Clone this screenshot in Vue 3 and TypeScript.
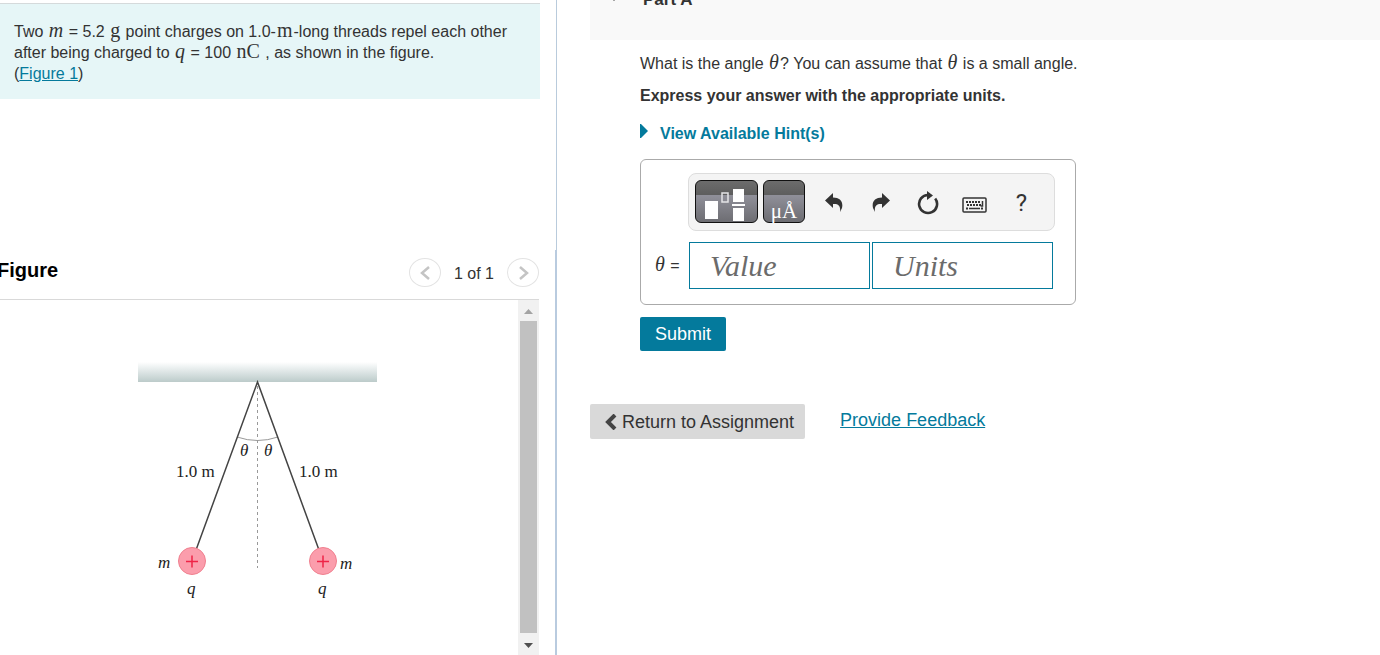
<script setup lang="ts">
import { ref } from 'vue'

const value = ref('')
const units = ref('')

const charges = [
  { x: 72, massX: 38, massY: 218 },
  { x: 203, massX: 220, massY: 219 },
]
</script>

<template>
  <div class="page">
    <aside class="left">
      <section class="problem">
        <p class="statement">
          Two <i class="math">m</i> = 5.2 <span class="math">g</span> point charges on 1.0-<span class="math">m</span>-long threads repel each other<br />
          after being charged to <i class="math">q</i> = 100 <span class="math">nC</span> , as shown in the figure.<br />
          (<a href="#figure">Figure 1</a>)
        </p>
      </section>

      <section id="figure" class="figure">
        <header class="figure-head">
          <h2>Figure</h2>
          <nav class="pager" aria-label="Figures">
            <button type="button" aria-label="Previous figure">
              <svg width="14" height="16" viewBox="0 0 14 16"><path d="M11 2 4 8l7 6" /></svg>
            </button>
            <span>1 of 1</span>
            <button type="button" aria-label="Next figure">
              <svg width="14" height="16" viewBox="0 0 14 16"><path d="m4 2 7 6-7 6" /></svg>
            </button>
          </nav>
        </header>

        <div class="figure-body">
          <div class="canvas">
            <svg class="diagram" width="260" height="250" viewBox="0 0 260 250" role="img" aria-label="Two charged masses hanging from a common point">
              <defs>
                <linearGradient id="ceiling" x1="0" y1="0" x2="0" y2="1">
                  <stop offset="0" stop-color="#ffffff" />
                  <stop offset="0.5" stop-color="#dde5e5" />
                  <stop offset="1" stop-color="#bccbca" />
                </linearGradient>
              </defs>
              <rect x="18" y="12" width="239" height="20" fill="url(#ceiling)" />
              <path d="M137.500 36V218" stroke="#999" stroke-dasharray="3 3" />
              <path d="M117 87q20.500 7 41 0" fill="none" stroke="#999" />
              <path d="M76 200 137.500 32 199 200" fill="none" stroke="#444" stroke-width="1.500" />
              <g v-for="c in charges" :key="c.x">
                <circle :cx="c.x" cy="211" r="13.500" fill="#fb9dac" stroke="#f0808f" />
                <path :d="`M${c.x - 6} 211.500h12M${c.x} 205.500v12`" stroke="#ee2447" stroke-width="1.500" />
                <text class="it" :x="c.massX" :y="c.massY">m</text>
                <text class="it" :x="c.x - 5" y="244">q</text>
              </g>
              <text class="it" x="120" y="106">θ</text>
              <text class="it" x="144" y="106">θ</text>
              <text x="56" y="127">1.0 m</text>
              <text x="179" y="127">1.0 m</text>
            </svg>
          </div>
          <div class="scrollbar" aria-hidden="true">
            <svg width="21" height="21" viewBox="0 0 21 21"><path d="M6 14h9l-4.500-5z" fill="#a3a3a3" /></svg>
            <div class="thumb"></div>
            <svg width="21" height="22" viewBox="0 0 21 22"><path d="M6 10h9l-4.500 5z" fill="#505050" /></svg>
          </div>
        </div>
      </section>
    </aside>

    <main class="right">
      <header class="part-head">
        <svg width="10" height="8" viewBox="0 0 10 8"><path d="M0 0h10L5 6z" fill="#333" /></svg>
        <h2>Part A</h2>
      </header>

      <div class="part">
        <p>What is the angle <i class="theta">θ</i>? You can assume that <i class="theta">θ</i> is a small angle.</p>
        <p class="instruction">Express your answer with the appropriate units.</p>
        <button type="button" class="hints">
          <svg width="8" height="14" viewBox="0 0 8 14"><path d="M0 0h1L8 7 1 14H0z" fill="#047a9c" /></svg>
          View Available Hint(s)
        </button>

        <form id="answer" class="answer" @submit.prevent>
          <div class="toolbar">
            <button type="button" class="dark wide" aria-label="Templates">
              <svg width="61" height="41" viewBox="0 0 61 41">
                <path d="M9 20h13v18H9zM37 8h11v13H37zM37 27h11v13H37zM36 23h13v2H36z" fill="#fff" />
                <path d="M26 12h6v9h-6z" fill="none" stroke="#e4e4e6" stroke-width="1.500" />
              </svg>
            </button>
            <button type="button" class="dark symbols" aria-label="Symbols">μÅ</button>
            <div class="tools">
              <button type="button" aria-label="Undo">
                <svg width="18" height="20" viewBox="0 0 18 20"><path d="M0 7.500 8 0v4.500c7 0 10.500 4 9 10.500L15 19c.8-6-1.500-8.500-7-8V15z" /></svg>
              </button>
              <button type="button" aria-label="Redo">
                <svg width="18" height="20" viewBox="0 0 18 20"><path d="M18 7.500 10 0v4.500C3 4.500-.5 8.500 1 15l2 4c-.8-6 1.500-8.500 7-8V15z" /></svg>
              </button>
              <button type="button" aria-label="Reset">
                <svg width="22" height="24" viewBox="0 0 22 24">
                  <path d="M18.200 7.500A9 9 0 1 1 11 4" fill="none" stroke="#333" stroke-width="2.600" />
                  <path d="M10 0 16 4.500 10 9z" />
                </svg>
              </button>
              <button type="button" aria-label="Keyboard">
                <svg class="keyboard" width="25" height="16" viewBox="0 0 25 16">
                  <path d="M2 1h21a1 1 0 0 1 1 1v12a1 1 0 0 1-1 1H2a1 1 0 0 1-1-1V2a1 1 0 0 1 1-1z" fill="none" stroke="#333" stroke-width="1.500" />
                  <path d="M4 5h14M5 8h14M4 11.500h2M19 11.500h2" fill="none" stroke="#333" stroke-width="2" stroke-dasharray="2 1" />
                  <path d="M7 11.500h11M20.500 4v5h-2" fill="none" stroke="#333" stroke-width="1.500" />
                </svg>
              </button>
              <button type="button" class="help" aria-label="Help">?</button>
            </div>
          </div>
          <div class="fields">
            <label for="value"><i class="theta">θ</i> =</label>
            <input id="value" v-model="value" type="text" placeholder="Value" />
            <input id="units" v-model="units" type="text" placeholder="Units" aria-label="Units" />
          </div>
        </form>

        <button type="submit" form="answer" class="submit">Submit</button>
      </div>

      <footer class="actions">
        <button type="button" class="return">
          <svg width="12" height="16" viewBox="0 0 12 16"><path d="M10 1 3 8l7 7" fill="none" stroke="#444" stroke-width="4" /></svg>
          Return to Assignment
        </button>
        <a href="#feedback">Provide Feedback</a>
      </footer>
    </main>
  </div>
</template>

<style>
body {
  margin: 0;
  background: #fff;
}
</style>

<style scoped>
* {
  box-sizing: border-box;
}
.page {
  display: grid;
  grid-template-columns: minmax(0, 557fr) minmax(0, 823fr);
  min-height: 100vh;
  overflow: hidden;
  font: 16px/20px "Liberation Sans", Arial, sans-serif;
  color: #333;
}
h2,
p {
  margin: 0;
}
a {
  color: #047a9c;
}
button {
  font: inherit;
  color: inherit;
  padding: 0;
  border: 0;
  background: none;
  cursor: pointer;
}
svg {
  display: block;
  flex: none;
}
.left {
  display: flex;
  flex-direction: column;
}
.problem {
  height: 250px;
  padding: 3px 16px 0 0;
  border-right: 1px solid #b9cbdc;
}
.statement {
  padding: 17px 14px 15px;
  border-top: 1px solid #d5dadb;
  background: #e6f6f7;
  line-height: 21px;
}
.math,
.theta {
  margin: 0 1px;
  font-family: "Liberation Serif", "Times New Roman", serif;
  font-size: 20px;
  line-height: 16px;
}
.figure {
  flex: 1;
  display: flex;
  flex-direction: column;
  padding-right: 16px;
  border-right: 2px solid #b9cbdf;
}
.figure-head {
  display: flex;
  align-items: center;
  justify-content: space-between;
  height: 50px;
  padding-bottom: 4px;
  border-bottom: 1px solid #d9d9d9;
}
.figure-head h2 {
  margin-left: -3px;
  padding-bottom: 6px;
  font-size: 20px;
  line-height: 24px;
  color: #000;
}
.pager {
  display: flex;
  align-items: center;
  gap: 13px;
}
.pager span {
  padding-top: 3px;
}
.pager button {
  display: grid;
  place-items: center;
  width: 32px;
  height: 29px;
  border: 1px solid #e3e3e3;
  border-radius: 50%;
}
.pager path {
  fill: none;
  stroke: #c4c4c4;
  stroke-width: 2.5;
}
.figure-body {
  flex: 1;
  display: flex;
}
.canvas {
  flex: 1;
  padding: 50px 0 0 120px;
}
.diagram text {
  font: 17px "Liberation Serif", "Times New Roman", serif;
  fill: #222;
}
.diagram .it {
  font-style: italic;
}
.scrollbar {
  display: flex;
  flex-direction: column;
  width: 21px;
  background: #f1f1f1;
}
.thumb {
  flex: 1;
  margin: 0 2px;
  background: #c1c1c1;
}
.right {
  padding-left: 33px;
}
.part-head {
  display: flex;
  gap: 24px;
  height: 40px;
  padding-left: 19px;
  background: #f9f9f9;
}
.part-head svg {
  margin-top: -5px;
}
.part-head h2 {
  margin-top: -12px;
  font-size: 17px;
  line-height: 24px;
}
.part {
  display: flex;
  flex-direction: column;
  align-items: flex-start;
  padding: 14px 0 0 50px;
}
.instruction {
  margin-top: 12px;
  font-weight: bold;
}
.hints {
  display: flex;
  align-items: flex-start;
  gap: 12px;
  margin-top: 18px;
  font-weight: bold;
  color: #047a9c;
}
.answer {
  width: 436px;
  max-width: 100%;
  margin-top: 15px;
  padding: 13px 20px 15px 13px;
  border: 1px solid #aaa;
  border-radius: 6px;
}
.toolbar {
  display: flex;
  align-items: center;
  gap: 5px;
  margin-left: 34px;
  padding: 6px 6px 7px;
  border: 1px solid #ddd;
  border-radius: 8px;
  background: #f4f4f4;
}
.dark {
  width: 42px;
  height: 43px;
  border: 1px solid #111;
  border-radius: 6px;
  background: linear-gradient(#6c6c6c, #5e5e5e 33%, #90909a 34%, #6d6d72);
  color: #fff;
}
.wide {
  width: 63px;
}
.symbols {
  padding-top: 19px;
  font: 21px/22px "Liberation Serif", "Times New Roman", serif;
}
.tools {
  flex: 1;
  display: grid;
  grid-template-columns: repeat(5, 1fr);
  padding: 3px 3px 0 0;
}
.tools button {
  display: grid;
  place-items: center;
  height: 30px;
  fill: #333;
}
.keyboard {
  margin-top: 4px;
}
.tools .help {
  font: 24px/24px Roboto, "Liberation Sans", sans-serif;
}
.fields {
  display: flex;
  align-items: center;
  gap: 2px;
  margin: 11px 2px 0 0;
}
.fields label {
  width: 33px;
}
.fields input {
  flex: 1;
  min-width: 0;
  height: 47px;
  padding: 0 20px;
  border: 1px solid #047a9c;
  border-radius: 0;
  background: #fff;
  color: #333;
  font: italic 30px "Liberation Serif", "Times New Roman", serif;
}
.fields input::placeholder {
  color: #6b6b6b;
}
.submit {
  margin-top: 12px;
  padding: 0 15px;
  border-radius: 2px;
  background: #047a9c;
  color: #fff;
  font-size: 18px;
  line-height: 34px;
}
.actions {
  display: flex;
  align-items: center;
  gap: 35px;
  margin-top: 53px;
  font-size: 18px;
}
.actions a {
  padding-bottom: 3px;
}
.return {
  display: flex;
  align-items: center;
  gap: 5px;
  height: 35px;
  padding: 0 11px 0 15px;
  border-radius: 2px;
  background: #d9d9d9;
}
</style>
